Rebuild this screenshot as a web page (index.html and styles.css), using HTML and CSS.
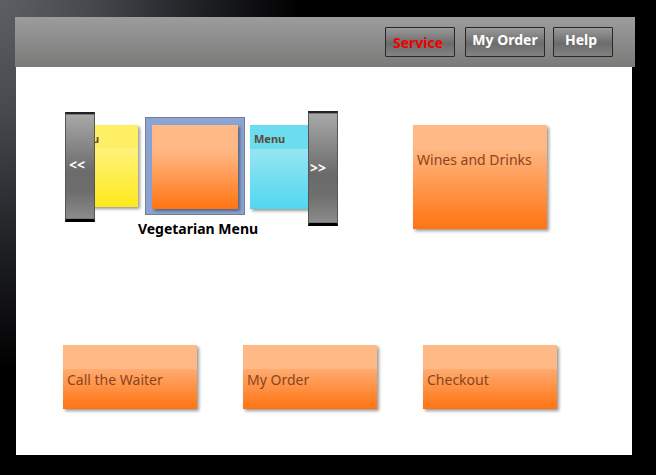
FILE: index.html
```html
<!DOCTYPE html>
<html lang="en">
<head>
<meta charset="utf-8">
<title>Restaurant Menu</title>
<link rel="stylesheet" href="styles.css">
</head>
<body>
<header class="topbar">
  <button class="nav-button nav-service" type="button">Service</button>
  <button class="nav-button nav-order" type="button">My Order</button>
  <button class="nav-button nav-help" type="button">Help</button>
</header>
<main class="board">
  <section class="carousel">
    <div class="carousel-row">
      <button class="arrow arrow-prev" type="button">&lt;&lt;</button>
      <div class="viewport">
        <button class="card card-yellow" type="button">Menu</button>
        <div class="selected"><button class="card card-orange" type="button" aria-labelledby="caption"></button></div>
        <button class="card card-cyan" type="button">Menu</button>
      </div>
      <button class="arrow arrow-next" type="button">&gt;&gt;</button>
    </div>
    <p class="caption" id="caption">Vegetarian Menu</p>
  </section>
  <button class="tile tile-tall" type="button">Wines and Drinks</button>
  <button class="tile" type="button">Call the Waiter</button>
  <button class="tile" type="button">My Order</button>
  <button class="tile" type="button">Checkout</button>
</main>
</body>
</html>
```
FILE: styles.css
```css
* {
  box-sizing: border-box;
}

body {
  margin: 0;
  min-height: 100vh;
  padding: 17px 21px 20px 15px;
  display: flex;
  flex-direction: column;
  background: #000 radial-gradient(ellipse 300px 370px at 0 0, #5e5f64, #48494e 30%, #1e1f23 68%, #000);
  font: bold 14px/20px "Noto Sans", sans-serif;
}

button {
  margin: 0;
  padding: 0;
  border: 0;
  font: inherit;
  color: inherit;
  text-align: left;
}

.topbar {
  height: 50px;
  padding: 0 22px 0 0;
  display: flex;
  justify-content: flex-end;
  align-items: center;
  background: linear-gradient(#9c9c9c, #7a7b79);
}

.nav-button {
  height: 30px;
  border: 1px solid #282828;
  border-radius: 1px;
  padding-bottom: 4px;
  background: linear-gradient(#9a9a9a, #6c6c6c 55%, #828282);
  color: #fff;
  text-align: center;
}

.nav-service {
  width: 70px;
  padding: 2px 4px 0 0;
  color: #f00000;
}

.nav-order {
  width: 80px;
  margin: 0 8px 0 10px;
}

.nav-help {
  width: 60px;
  padding-right: 4px;
}

.board {
  flex: 1;
  margin: 0 3px 0 1px;
  padding: 44px 75px 46px 47px;
  display: grid;
  grid-template-columns: repeat(3, 1fr);
  grid-template-rows: 1fr auto;
  column-gap: 46px;
  align-items: start;
  background: #fff;
}

.carousel {
  grid-column: span 2;
  margin: 0 39px 0 2px;
}

.carousel-row {
  height: 108px;
  display: flex;
}

.arrow {
  flex: none;
  width: 30px;
  border: 1px solid #555;
  border-width: 2px 1px 3px;
  border-top-color: #222;
  border-bottom-color: #000;
  background: linear-gradient(#a9a9a9, #6b6b6b 55%, #6e6e6e 75%, #8c8c8c);
  box-shadow: inset 0 1px #777, inset 0 -1px #777;
  color: #fff;
}

.arrow-prev {
  height: 110px;
  margin-top: 1px;
  padding: 0 0 3px 3px;
}

.arrow-next {
  height: 115px;
  padding: 0 0 1px 1px;
}

.viewport {
  flex: 1;
  min-width: 0;
  padding: 6px 0 4px;
  display: flex;
  align-items: flex-start;
  overflow: hidden;
}

.card {
  flex: none;
  width: 86px;
  height: 84px;
  padding: 4px;
  display: flex;
  box-shadow: 2px 2px 3px #0006;
  color: #5f4939;
  font-size: 11px;
}

.card-yellow {
  height: 82px;
  margin: 8px 7px 0 -43px;
  padding-left: 16px;
  background: linear-gradient(#ffef65 28%, #fff27c 28%, #ffe91b);
}

.selected {
  flex: none;
  width: 100px;
  height: 98px;
  padding: 7px 6px;
  border: 1px solid #777f8d;
  background: #8ba4d4;
}

.card-orange,
.tile {
  background: linear-gradient(#ffb987 25%, #ffb47d 35%, #ff7412);
}

.card-cyan {
  margin: 8px 0 0 5px;
  background: linear-gradient(#6cdcef 28%, #98e5f2 28%, #50d7f0);
}

.caption {
  margin: 0 7px 0 0;
  text-align: center;
}

.tile {
  height: 64px;
  padding: 6px 4px 0;
  background: linear-gradient(#ffb987 37%, #ffab70 37%, #ff7412);
  box-shadow: 2px 2px 3px #0006;
  color: #8a4420;
  font-weight: 400;
}

.tile-tall {
  height: 104px;
  margin: 14px 10px 0 -10px;
  padding: 0 4px 34px;
  background: linear-gradient(#ffb987 23%, #ffb47d 25%, #ff7412);
}
```
